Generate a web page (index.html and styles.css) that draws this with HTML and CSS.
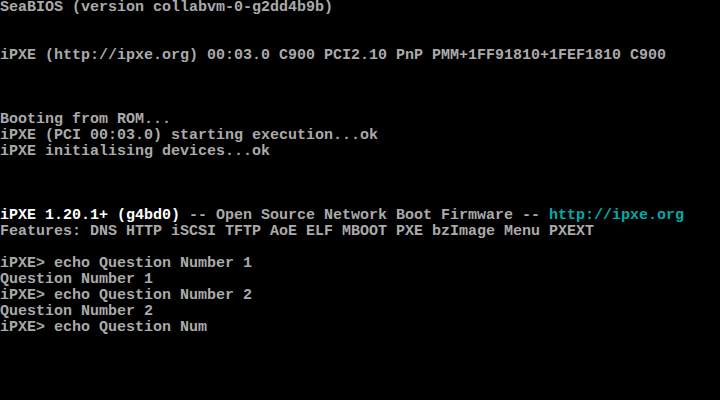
FILE: index.html
```html
<!DOCTYPE html>
<html>
<head>
<meta charset="utf-8">
<link rel="stylesheet" href="styles.css">
</head>
<body>
<pre class="console">SeaBIOS (version collabvm-0-g2dd4b9b)


iPXE (http://ipxe.org) 00:03.0 C900 PCI2.10 PnP PMM+1FF91810+1FEF1810 C900



Booting from ROM...
iPXE (PCI 00:03.0) starting execution...ok
iPXE initialising devices...ok



<span class="bright">iPXE 1.20.1+ (g4bd0)</span> -- Open Source Network Boot Firmware -- <span class="link">http://ipxe.org</span>
Features: DNS HTTP iSCSI TFTP AoE ELF MBOOT PXE bzImage Menu PXEXT

iPXE&gt; echo Question Number 1
Question Number 1
iPXE&gt; echo Question Number 2
Question Number 2
iPXE&gt; echo Question Num</pre>
</body>
</html>
```
FILE: styles.css
```css
html, body {
  margin: 0;
  padding: 0;
  background: #000;
  width: 720px;
  height: 400px;
  overflow: hidden;
}
.console {
  margin: 0;
  padding: 0;
  font-family: "Liberation Mono", "DejaVu Sans Mono", monospace;
  font-size: 15px;
  font-weight: bold;
  line-height: 16px;
  color: #aaaaaa;
  white-space: pre;
}
.bright {
  color: #ffffff;
}
.link {
  color: #00aaaa;
}
```
